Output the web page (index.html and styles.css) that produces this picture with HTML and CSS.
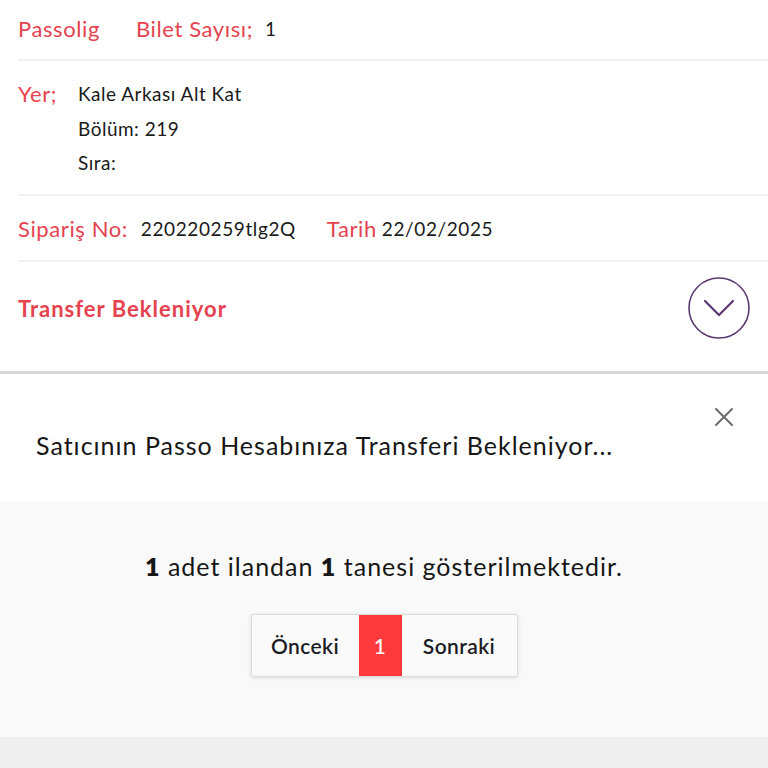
FILE: index.html
```html
<!DOCTYPE html>
<html lang="tr">
<head>
<meta charset="utf-8">
<link rel="stylesheet" href="styles.css">
</head>
<body>
<main class="page">
  <section class="card">
    <div class="row row-top">
      <span class="label label-brand">Passolig</span>
      <span class="label">Bilet Sayısı;</span>
      <span class="value">1</span>
    </div>
    <div class="row row-place">
      <span class="label label-yer">Yer;</span>
      <div class="place-lines">
        <span class="value">Kale Arkası Alt Kat</span>
        <span class="value">Bölüm: 219</span>
        <span class="value">Sıra:</span>
      </div>
    </div>
    <div class="row row-order">
      <span class="label">Sipariş No:</span>
      <span class="value value-order">220220259tlg2Q</span>
      <span class="label">Tarih</span>
      <span class="value">22/02/2025</span>
    </div>
    <div class="row row-status">
      <span class="status">Transfer Bekleniyor</span>
      <button class="toggle" type="button" aria-label="Aç">
        <svg width="62" height="62" viewBox="0 0 62 62">
          <circle cx="31" cy="31" r="30" fill="none" stroke="#5b3872" stroke-width="1.6"/>
          <path d="M17 24 L31 38 L45 24" fill="none" stroke="#5b3872" stroke-width="2.2" stroke-linecap="round" stroke-linejoin="round"/>
        </svg>
      </button>
    </div>
  </section>
  <section class="notice">
    <button class="close" type="button" aria-label="Kapat">
      <svg width="20" height="20" viewBox="0 0 20 20">
        <path d="M2 2 L18 18 M18 2 L2 18" stroke="#6b6b6b" stroke-width="2" stroke-linecap="round"/>
      </svg>
    </button>
    <p class="notice-text">Satıcının Passo Hesabınıza Transferi Bekleniyor...</p>
  </section>
  <section class="footer">
    <p class="count"><b>1</b> adet ilandan <b>1</b> tanesi gösterilmektedir.</p>
    <nav class="pager">
      <span class="pg pg-prev">Önceki</span>
      <span class="pg pg-active">1</span>
      <span class="pg pg-next">Sonraki</span>
    </nav>
  </section>
</main>
</body>
</html>
```
FILE: styles.css
```css
* { box-sizing: border-box; }
html, body { margin: 0; padding: 0; }
body {
  background: #efefef;
  font-family: "Lato", "Noto Sans", sans-serif;
  color: #1a1a1a;
  width: 768px;
}
.page { display: flex; flex-direction: column; }

.card {
  background: #fff;
  padding-left: 18px;
  border-bottom: 3px solid #d6d6d6;
}
.row {
  display: flex;
  align-items: center;
  border-bottom: 2px solid #f2f2f2;
}
.row-top { height: 61px; padding-bottom: 2px; }
.row-place { height: 135px; align-items: flex-start; padding-top: 16px; }
.row-order { height: 66px; }
.row-status {
  height: 109px;
  border-bottom: none;
  justify-content: space-between;
  padding-right: 18px;
  padding-bottom: 17px;
}

.label {
  color: #e5434f;
  font-size: 22px;
  font-weight: 400;
  letter-spacing: 0.6px;
}
.label-brand { margin-right: 36px; }
.row-top .label + .label { margin-right: 12px; }
.value { font-size: 19px; color: #1a1a1a; letter-spacing: 0.5px; }
.label-yer { width: 60px; line-height: 34px; }
.place-lines { display: flex; flex-direction: column; }
.place-lines .value { line-height: 34.5px; }
.row-order .label:first-child { margin-right: 8px; }
.value-order { margin-right: 31px; }
.row-order .label + .value { margin-left: 5px; letter-spacing: 0.6px; }

.status {
  color: #e5434f;
  font-size: 22px;
  font-weight: 700;
  letter-spacing: 1px;
}
.toggle {
  width: 62px; height: 62px;
  padding: 0; border: none; background: none;
  display: flex;
}

.notice {
  background: #fff;
  height: 127px;
  display: flex;
  flex-direction: column;
  padding: 33px 34px 0 36px;
}
.close {
  align-self: flex-end;
  width: 20px; height: 20px;
  padding: 0; border: none; background: none;
  display: flex;
}
.notice-text {
  margin: 3px 0 0;
  font-size: 25px;
  font-weight: 400;
  color: #161616;
  letter-spacing: 1px;
}

.footer {
  background: #f9f9f9;
  height: 236px;
  display: flex;
  flex-direction: column;
  align-items: center;
  padding-top: 50px;
}
.count {
  margin: 0;
  font-size: 25px;
  color: #161616;
  letter-spacing: 1px;
}
.count b { font-weight: 800; }
.pager {
  margin-top: 33px;
  display: flex;
  height: 63px;
  border: 1px solid #dcdcdc;
  border-radius: 3px;
  box-shadow: 0 1px 4px rgba(0,0,0,0.12);
  background: #fafafa;
  overflow: hidden;
}
.pg {
  display: flex;
  align-items: center;
  justify-content: center;
  font-size: 21px;
  font-weight: 600;
  color: #1c1c24;
  letter-spacing: 0.4px;
}
.pg-prev { width: 107px; }
.pg-active { width: 43px; background: #ff3a3d; color: #fff; font-weight: 500; }
.pg-next { width: 115px; }
```
